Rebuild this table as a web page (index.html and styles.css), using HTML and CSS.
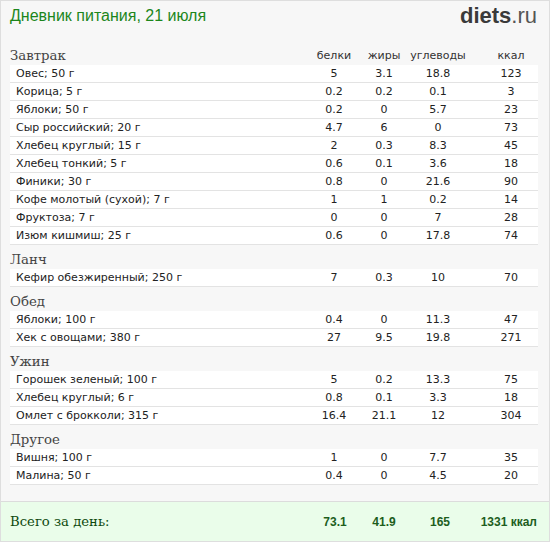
FILE: index.html
```html
<!DOCTYPE html>
<html lang="ru">
<head>
<meta charset="utf-8">
<link rel="stylesheet" href="styles.css">
</head>
<body>
<div class="box">
  <div class="top">
    <div class="title">Дневник питания, 21 июля</div>
    <div class="logo"><b>diets</b>.ru</div>
  </div>
  <div class="content">
    <div class="sec grid">
      <div class="sname">Завтрак</div>
      <div class="ch">белки</div><div class="ch">жиры</div><div class="ch">углеводы</div><div class="ch kc">ккал</div>
    </div>
    <div class="row grid"><div class="n">Овес; 50 г</div><div>5</div><div>3.1</div><div>18.8</div><div class="kc">123</div></div>
    <div class="row grid"><div class="n">Корица; 5 г</div><div>0.2</div><div>0.2</div><div>0.1</div><div class="kc">3</div></div>
    <div class="row grid"><div class="n">Яблоки; 50 г</div><div>0.2</div><div>0</div><div>5.7</div><div class="kc">23</div></div>
    <div class="row grid"><div class="n">Сыр российский; 20 г</div><div>4.7</div><div>6</div><div>0</div><div class="kc">73</div></div>
    <div class="row grid"><div class="n">Хлебец круглый; 15 г</div><div>2</div><div>0.3</div><div>8.3</div><div class="kc">45</div></div>
    <div class="row grid"><div class="n">Хлебец тонкий; 5 г</div><div>0.6</div><div>0.1</div><div>3.6</div><div class="kc">18</div></div>
    <div class="row grid"><div class="n">Финики; 30 г</div><div>0.8</div><div>0</div><div>21.6</div><div class="kc">90</div></div>
    <div class="row grid"><div class="n">Кофе молотый (сухой); 7 г</div><div>1</div><div>1</div><div>0.2</div><div class="kc">14</div></div>
    <div class="row grid"><div class="n">Фруктоза; 7 г</div><div>0</div><div>0</div><div>7</div><div class="kc">28</div></div>
    <div class="row grid"><div class="n">Изюм кишмиш; 25 г</div><div>0.6</div><div>0</div><div>17.8</div><div class="kc">74</div></div>

    <div class="sec"><div class="sname">Ланч</div></div>
    <div class="row grid"><div class="n">Кефир обезжиренный; 250 г</div><div>7</div><div>0.3</div><div>10</div><div class="kc">70</div></div>

    <div class="sec"><div class="sname">Обед</div></div>
    <div class="row grid"><div class="n">Яблоки; 100 г</div><div>0.4</div><div>0</div><div>11.3</div><div class="kc">47</div></div>
    <div class="row grid"><div class="n">Хек с овощами; 380 г</div><div>27</div><div>9.5</div><div>19.8</div><div class="kc">271</div></div>

    <div class="sec"><div class="sname">Ужин</div></div>
    <div class="row grid"><div class="n">Горошек зеленый; 100 г</div><div>5</div><div>0.2</div><div>13.3</div><div class="kc">75</div></div>
    <div class="row grid"><div class="n">Хлебец круглый; 6 г</div><div>0.8</div><div>0.1</div><div>3.3</div><div class="kc">18</div></div>
    <div class="row grid"><div class="n">Омлет с брокколи; 315 г</div><div>16.4</div><div>21.1</div><div>12</div><div class="kc">304</div></div>

    <div class="sec"><div class="sname">Другое</div></div>
    <div class="row grid"><div class="n">Вишня; 100 г</div><div>1</div><div>0</div><div>7.7</div><div class="kc">35</div></div>
    <div class="row grid"><div class="n">Малина; 50 г</div><div>0.4</div><div>0</div><div>4.5</div><div class="kc">20</div></div>
  </div>
  <div class="total">
    <div class="tl">Всего за день:</div>
    <div class="tv t1">73.1</div>
    <div class="tv t2">41.9</div>
    <div class="tv t3">165</div>
    <div class="tv t4">1331 ккал</div>
  </div>
</div>
</body>
</html>
```

FILE: styles.css
```css
html, body {
  margin: 0;
  padding: 0;
  background: #ffffff;
}
.box {
  width: 548px;
  height: 540px;
  border: 1px solid #dedede;
  background: #f7f7f7;
  display: flex;
  flex-direction: column;
}
.top {
  display: flex;
  justify-content: space-between;
  align-items: flex-start;
  padding: 5px 12px 0 9px;
  height: 35px;
}
.title {
  font-family: "Liberation Sans", Arial, sans-serif;
  font-size: 16px;
  line-height: 20px;
  color: #1c861c;
}
.logo {
  font-family: "Liberation Sans", Arial, sans-serif;
  font-size: 22px;
  line-height: 22px;
  color: #555;
  margin-top: -1px;
}
.logo b {
  color: #3a3a3a;
}
.content {
  padding: 0 11px 0 9px;
  flex: 1;
}
.grid {
  display: grid;
  grid-template-columns: 1fr 50px 50px 58px 71px;
}
.sec {
  height: 24px;
  display: flex;
  align-items: flex-end;
  font-family: "DejaVu Serif", serif;
  font-size: 13.3px;
  color: #444;
}
.sec.grid {
  display: grid;
  align-items: end;
}
.sname {
  line-height: 18px;
}
.ch {
  font-family: "DejaVu Sans", Verdana, sans-serif;
  font-size: 11px;
  color: #333;
  text-align: center;
  line-height: 18px;
}
.row {
  height: 17px;
  background: #ffffff;
  border-bottom: 1px solid #e3e3e3;
  font-family: "DejaVu Sans", Verdana, sans-serif;
  font-size: 11px;
  color: #222;
  line-height: 17px;
}
.row > div {
  text-align: center;
}
.row > .n {
  text-align: left;
  padding-left: 6px;
}
.kc {
  padding-left: 17px;
}
.total {
  height: 39px;
  border-top: 1px solid #dcdcdc;
  background: #eafdea;
  display: flex;
  align-items: center;
  padding: 0 12px 0 9px;
}
.tl {
  font-family: "DejaVu Serif", serif;
  font-size: 13.2px;
  color: #0e4a0e;
  flex: 1;
}
.tv {
  font-family: "Liberation Sans", Arial, sans-serif;
  font-size: 12px;
  font-weight: bold;
  color: #1d5e1d;
  text-align: center;
  white-space: nowrap;
}
.t1 { width: 30px; }
.t2 { width: 30px; margin-left: 19px; }
.t3 { width: 30px; margin-left: 26px; }
.t4 { width: 70px; margin-left: 12px; text-align: right; }
```
